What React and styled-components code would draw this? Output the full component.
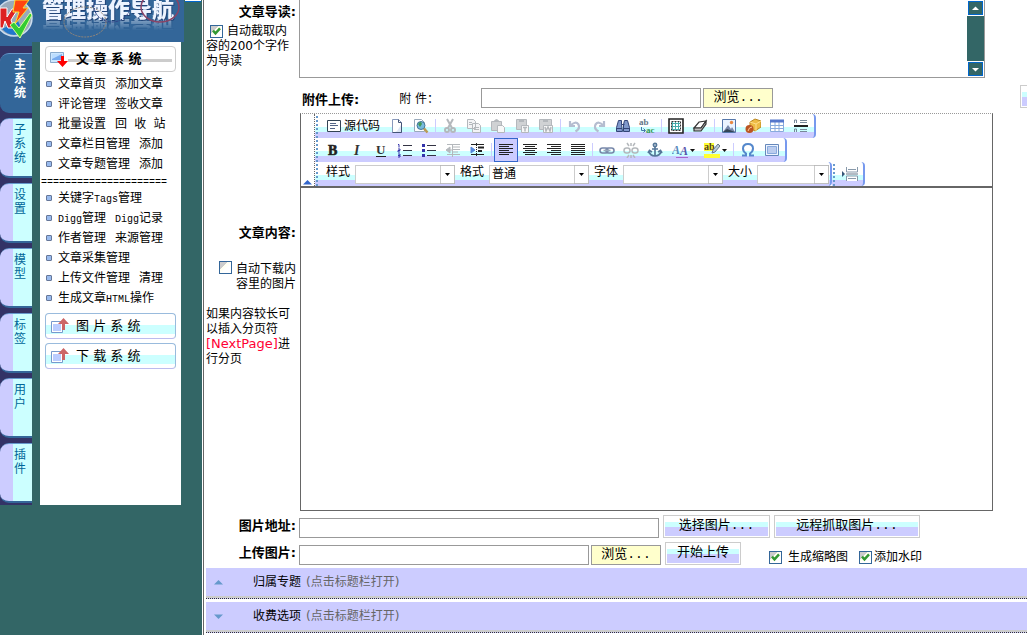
import React from "react";
import styled, { createGlobalStyle } from "styled-components";

const c = {
  teal: "#336666",
  blue: "#336699",
  navy: "#333366",
  lavender: "#ccccff",
  cyan: "#ccffff",
  cream: "#ffffcc",
  line: "#999999",
  dark: "#666666",
};

const uiFont = `"DejaVu Sans", "Noto Sans CJK SC", sans-serif`;
const songFont = `"Liberation Mono", "Noto Sans CJK SC", monospace`;

const GlobalStyle = createGlobalStyle`
  * { box-sizing: border-box; }
  body { margin: 0; background: #fff; font: 12px/15px ${uiFont}; color: #000; overflow: hidden; }
  button, input, select, textarea { font: inherit; color: inherit; margin: 0; padding: 0; border-radius: 0; }
  a { color: inherit; text-decoration: none; }
  svg { display: block; }
`;

const Page = styled.div`
  display: flex;
  height: 100vh;
  overflow: hidden;
`;

/* ---------- sidebar ---------- */

const Sidebar = styled.aside`
  flex: 0 0 203px;
  background: ${c.teal};
  border-right: 1px solid #fff;
`;

const Header = styled.header`
  position: relative;
  display: flex;
  align-items: flex-start;
  width: 184px;
  height: 42px;
  padding-left: 42px;
  background: ${c.blue};
`;

const Brand = styled.h1`
  margin: -5px 0 0;
  font: 900 22px/24px "Noto Sans CJK SC", sans-serif;
  color: #eef4ff;
  white-space: nowrap;
  text-shadow: 1px 1px 0 #224477;
  -webkit-box-reflect: below -4px linear-gradient(transparent 35%, rgba(0, 0, 0, 0.6));
`;

const HeaderArt = styled.svg`
  position: absolute;
  left: 0;
  top: 0;
`;

const ScrollStub = styled.div`
  position: absolute;
  left: 185px;
  top: 0;
  width: 16px;
  height: 2px;
  background: #fff;
  border-bottom: 1px solid #0066cc;
`;

const SideBody = styled.div`
  display: flex;
  align-items: flex-start;
  gap: 8px;
`;

const Tabs = styled.nav`
  display: flex;
  flex-direction: column;
  gap: 5px;
  width: 32px;
  padding: 11px 0 2px;
  background: linear-gradient(${c.blue} 4px, ${c.navy} 4px);
`;

const Tab = styled.button`
  display: flex;
  width: 32px;
  height: 60px;
  padding: 4px 0 0 14px;
  border: 0;
  border-top: 1px solid #6699cc;
  border-bottom: 2px solid ${c.blue};
  border-radius: 9px 0 0 9px;
  background: ${(p) =>
    p.$active ? c.blue : `linear-gradient(90deg, ${c.lavender} 13px, ${c.cyan} 13px)`};
  color: ${(p) => (p.$active ? "#fff" : "#006699")};
  font-weight: ${(p) => (p.$active ? "bold" : "normal")};
  line-height: 14px;
  text-align: left;
  word-break: break-all;

  span { width: 13px; }
`;

const Menu = styled.nav`
  width: 141px;
  min-height: 463px;
  padding: 4px 5px;
  background: #fff;
`;

const SystemTitle = styled.button`
  display: flex;
  align-items: center;
  gap: 7px;
  width: 131px;
  height: 26px;
  padding: 0 0 1px 4px;
  border: 1px solid ${(p) => (p.$open ? "#cccccc" : "#99bbdd")};
  border-bottom-color: ${(p) => (p.$open ? "#cccccc" : "#bbbbee")};
  border-radius: 4px;
  background: ${(p) =>
    p.$open
      ? "linear-gradient(#fff 12px, #ccc 12px 15px, #fff 15px) 22px 0 / 104px 100% no-repeat #fff"
      : `linear-gradient(#fff 11px, ${c.cyan} 11px 20px, #fff 20px)`};
  font: ${(p) => (p.$open ? "bold" : "normal")} 13px/20px ${uiFont};
  white-space: nowrap;

  & + & { margin-top: 4px; }
`;

const MenuList = styled.ul`
  margin: 0;
  padding: 0;
  list-style: none;
`;

const MenuItem = styled.li`
  display: flex;
  align-items: center;
  gap: 9px;
  height: 20px;
  padding-left: 1px;
  font: 12px/20px ${songFont};
  white-space: nowrap;
`;

const Bullet = styled.i`
  width: 6px;
  height: 6px;
  margin: 0 -3px 3px 0;
  border: 1px solid #667799;
  border-radius: 1px;
  background: #99bbee;
`;

const Latin = styled.span`
  font-size: 10px;
`;

const Divider = styled.div`
  height: 14px;
  margin: 0 -4px;
  font: 10px/16px ${songFont};
  white-space: nowrap;
`;

const MenuGroup = styled.div`
  padding: 3px 0 4px;
`;

/* ---------- form ---------- */

const Main = styled.main`
  flex: 1;
  min-width: 0;
  overflow: hidden;
  border-left: 1px solid ${c.dark};
`;

const Row = styled.div`
  display: grid;
  grid-template-columns: 92px minmax(0, 1fr);
  gap: 3px;
`;

const LabelCell = styled.div`
  padding: ${(p) => p.$top || 0}px 0 0 2px;
`;

const FieldLabel = styled.label`
  display: block;
  font: bold 13px/16px ${uiFont};
  text-align: ${(p) => p.$align || "right"};
  white-space: nowrap;
`;

const Hint = styled.div`
  margin-top: ${(p) => p.$gap}px;
  text-align: ${(p) => p.$align || "left"};
  white-space: nowrap;

  em { font: 13px/12px ${uiFont}; color: #ff0033; }
`;

const CheckBox = styled.span`
  position: relative;
  display: inline-block;
  width: 13px;
  height: 13px;
  vertical-align: -1px;

  input {
    display: block;
    width: 13px;
    height: 13px;
    appearance: none;
    border: 1px solid ${c.blue};
    background: linear-gradient(135deg, #cccccc 35%, #ffffee 36%, #fff 60%);
  }
  svg { position: absolute; left: 0; top: 0; pointer-events: none; }
`;

const Check = ({ id, on }) => (
  <CheckBox>
    <input type="checkbox" id={id} defaultChecked={on} />
    {on && (
      <svg width="13" height="13" viewBox="0 0 13 13" fill="none" stroke="#339933" strokeWidth="2.4">
        <path d="M3 5.6 5.5 8.4 10 3.4" />
      </svg>
    )}
  </CheckBox>
);

const Intro = styled.div`
  display: flex;
  width: 100%;
  max-width: 686px;
  height: 78px;
  border: 1px solid ${c.line};
  border-top: 0;

  textarea { flex: 1; min-width: 0; border: 0; outline: 0; resize: none; overflow: hidden; }
`;

const ScrollBar = styled.div`
  display: flex;
  flex-direction: column;
  align-items: flex-end;
  justify-content: space-between;
  width: 17px;
  background: ${c.teal};
`;

const ScrollButton = styled.button`
  display: grid;
  place-items: center;
  width: 17px;
  height: 16px;
  border: 1px solid #fff;
  outline: 1px solid #0066cc;
  outline-offset: -2px;
  background: ${c.teal};
`;

const TextInput = styled.input`
  flex: 0 1 ${(p) => p.$w}px;
  min-width: 0;
  height: 20px;
  border: 1px solid ${c.line};
  background: #fff;
`;

const FormLine = styled.div`
  display: flex;
  align-items: flex-end;
  gap: 4px;
  height: ${(p) => p.$h}px;
  padding: ${(p) => p.$pad};
  white-space: nowrap;
`;

const Browse = styled.button`
  width: 70px;
  height: 20px;
  flex: none;
  margin-left: -2px;
  border: 1px solid ${c.line};
  background: ${c.cream};
  font: 13px/16px ${songFont};
`;

const Action = styled.button`
  width: ${(p) => p.$w}px;
  height: 23px;
  flex: none;
  padding-bottom: 1px;
  border: 1px solid #cccccc;
  background: linear-gradient(#fff 6px, ${c.cyan} 6px 11px, ${c.lavender} 11px 20px, #fff 20px) 1px 0 /
    calc(100% - 2px) 100% no-repeat #fff;
  font: 13px/16px ${songFont};
`;

const EdgeAction = styled(Action)`
  margin-left: auto;
  margin-right: -39px;
  padding-left: 3px;
`;

const AttachLabel = styled.label`
  width: 78px;
  margin-left: 36px;
  line-height: 18px;
`;

const OptionLabel = styled.label`
  line-height: 16px;
`;

const Option = styled.span`
  display: flex;
  align-items: center;
  gap: ${(p) => p.$gap}px;
  margin-left: ${(p) => p.$left}px;
`;

/* ---------- rich text editor ---------- */

const Editor = styled.div`
  width: calc(100% - 1px);
  max-width: 693px;
  margin-left: 1px;
  height: 398px;
  display: flex;
  flex-direction: column;
  border: 1px solid ${c.dark};
  border-top: 1px dotted ${c.line};
`;

const ToolArea = styled.div`
  display: flex;
  height: 74px;
  border-bottom: 2px solid ${c.dark};
`;

const Collapse = styled.button`
  display: flex;
  align-items: flex-end;
  width: 14px;
  padding: 0 0 1px 2px;
  border: 0;
  border-right: 1px dotted ${c.dark};
  background: #fff;
`;

const ToolRows = styled.div`
  min-width: 0;
`;

const ToolRow = styled.div`
  display: flex;
  height: 24px;
`;

const ToolBar = styled.div`
  display: flex;
  align-items: center;
  height: 24px;
  padding: 0 1px 0 6px;
  border-right: 2px solid #7799ee;
  border-radius: 0 4px 4px 0;
  background:
    linear-gradient(#6699cc 2px, transparent 2px) 1px 6px / 2px 4px repeat-y,
    linear-gradient(#fff 13px, ${c.cyan} 13px 18px, ${c.lavender} 18px);
`;

const ToolButton = styled.button`
  display: flex;
  align-items: center;
  justify-content: center;
  gap: 2px;
  flex: none;
  width: ${(p) => p.$w || 24}px;
  height: 24px;
  border: ${(p) => (p.$active ? "1px solid #3366cc" : "0")};
  background: ${(p) => (p.$active ? c.lavender : "none")};
  white-space: nowrap;
`;

const Separator = styled.i`
  width: 1px;
  height: 14px;
  margin: 0 2px;
  background: ${c.lavender};
`;

const ComboLabel = styled.label`
  padding: 0 5px;
  margin-bottom: 3px;
  white-space: nowrap;
`;

const Combo = styled.span`
  position: relative;
  width: ${(p) => p.$w}px;
  height: 19px;

  select {
    display: block;
    width: 100%;
    height: 19px;
    padding-left: 2px;
    appearance: none;
    border: 1px solid #cccccc;
    background: #fff;
    line-height: 15px;
  }
  svg { position: absolute; right: 0; top: 0; pointer-events: none; }
`;

const EditArea = styled.div`
  flex: 1;
  outline: 0;
`;

const g = "#b4b8bc";
const serif = "Liberation Serif, serif";
const icons = {
  source: (
    <g fill="none" stroke="#334455">
      <path d="M1.5 2.5h13v11h-13z" fill="#fff" />
      <path d="M4 5.5h6M4 7.5h8M4 10.5h5" stroke="#556688" />
    </g>
  ),
  page: (
    <g>
      <path d="M3.5 1.5h6l3 3v10h-9z" fill="#fff" stroke="#8899bb" />
      <path d="M9.5 1.5v3h3M12.5 5v9.5h-9" fill="none" stroke="#445577" />
      <path d="m8 13 4-6v7H6z" fill="#dde6f5" />
    </g>
  ),
  preview: (
    <g>
      <path d="M1.5 1.5h7l3 3v9h-10z" fill="#fff" stroke="#99aabb" />
      <circle cx="8" cy="7.5" r="4" fill="#77bbdd" stroke="#447799" />
      <path d="M5 6q3-4 4 0l-2 3z" fill="#449955" />
      <path d="m11 10.500 3.500 4" stroke="#bb9955" strokeWidth="2.500" />
    </g>
  ),
  cut: (
    <g fill="none" stroke={g} strokeWidth="2">
      <path d="M5 1 10 10M11 1 6 10" />
      <circle cx="5" cy="12" r="2" />
      <circle cx="11" cy="12" r="2" />
    </g>
  ),
  copy: (
    <g fill="#f4f4f6" stroke={g}>
      <path d="M1.500 1.500h6l2 2v7h-8zM6.500 5.500h6l2 2v7h-8z" />
      <path d="M8 9.500h5M8 11.500h5M3 4.500h3M3 6.500h3" />
    </g>
  ),
  paste: (
    <g stroke={g} fill="#d0d2d4">
      <path d="M1.500 3.500h10v9h-10z" />
      <path d="M4 3.500q2.500-4 5 0z" fill={g} />
      <path d="M7.500 7.500h5l2 2v5h-7z" fill="#f8f8f8" />
    </g>
  ),
  pasteText: (
    <g stroke={g} fill="#d0d2d4">
      <path d="M2.500 1.500h10v10h-10z" />
      <path d="M5 2.500h5" strokeWidth="3" />
      <path d="M7.500 7.500h7v7h-7z" fill="#f8f8f8" />
      <path d="M9 9.500h4M11 9.500v4" strokeWidth="1.500" />
    </g>
  ),
  pasteWord: (
    <g stroke={g} fill="#d0d2d4">
      <path d="M1.500 1.500h12v10h-12z" />
      <path d="M5 2.500h5" strokeWidth="3" />
      <path d="M5.500 7.500h9v7h-9z" fill="#f8f8f8" />
      <path d="m7 9 1 4 2-4 2 4 1-4" fill="none" strokeWidth="1.500" />
    </g>
  ),
  undo: <path d="M3 3v5h5M3.500 7.500q5-5 8-1 2 4-3 7" fill="none" stroke="#b5bdd0" strokeWidth="2.200" />,
  redo: <path d="M13 3v5H8M12.500 7.500q-5-5-8-1-2 4 3 7" fill="none" stroke="#b5bdd0" strokeWidth="2.200" />,
  find: (
    <g fill="#8099cc" stroke="#334477">
      <path d="M3.500 2.500h3v4l1 7h-6v-4zM9.500 2.500h3l2 7v4h-6v-7z" />
      <path d="M6.500 6.500h3M2 10.500h5M9 10.500h5" />
    </g>
  ),
  replace: (
    <g fontFamily={serif} fontSize="9" fontWeight="bold">
      <text x="0" y="7" fill="#667788">ab</text>
      <text x="7" y="15" fill="#339955">ac</text>
      <path d="M2.500 9v3.500H6M4.500 10.500l2 2-2 2" fill="none" stroke="#4477aa" />
    </g>
  ),
  selectAll: (
    <g fill="none">
      <path d="M1 1h14v14H1z" stroke="#222" strokeWidth="1.600" fill="#fff" />
      <path d="M4.500 4v8M7.500 4v8M10.500 4v8M4 5.500h8M4 8.500h8M4 11.500h8" stroke="#44aaaa" />
      <path d="M3.500 3.500h9v9h-9z" stroke="#333" strokeDasharray="2 1" />
    </g>
  ),
  eraser: (
    <g fill="#fff" stroke="#333" strokeWidth="1.200">
      <path d="m7 4 7-1-5 7H2z" />
      <path d="M2 10v3h7l5-7V3l-5 7z" fill="#bbb" />
    </g>
  ),
  image: (
    <g>
      <path d="M1.500 1.500h13v13h-13z" fill="#eaf4ff" stroke="#5577aa" />
      <path d="m2 14 5-7 3 4 1-2 3 5z" fill="#7788aa" />
      <circle cx="10.500" cy="4.500" r="1.700" fill="#e88844" />
      <path d="m2 14 4-3 8 3z" fill="#334455" />
    </g>
  ),
  flash: (
    <g>
      <path d="m5 4 5-3 6 2v6l-6 4-5-3z" fill="#eebb44" stroke="#bb8822" />
      <path d="m5 4 6 2 5-3M11 6v7" stroke="#ffdd88" fill="none" />
      <circle cx="4.500" cy="11" r="4" fill="#bb5522" />
      <path d="M3 13q1-4 4-4" stroke="#ffcc99" fill="none" />
    </g>
  ),
  table: (
    <g fill="#fff" stroke="#88aadd">
      <path d="M1.500 2.500h13v11h-13zM6 3v11M10 3v11M2 7.500h12M2 10.500h12" />
      <path d="M1 3h14" stroke="#5577cc" strokeWidth="3" />
    </g>
  ),
  rule: (
    <g stroke="#778899">
      <path d="M1 8h14" stroke="#222" strokeWidth="2" />
      <path d="M7 2.500h7M7 4.500h7M7 11.500h7M7 13.500h7M1.500 5v-3h2v3M1.500 14v-3h2v3" fill="none" />
    </g>
  ),
  bold: <text x="3" y="13" fontFamily={serif} fontSize="14" fontWeight="bold" fill="#222" stroke="#222" strokeWidth=".6">B</text>,
  italic: <text x="5" y="13" fontFamily={serif} fontSize="14" fontWeight="bold" fontStyle="italic" fill="#333">I</text>,
  underline: (
    <g>
      <text x="3" y="12" fontFamily={serif} fontSize="13" fontWeight="bold" fill="#333">U</text>
      <path d="M3 14.500h10" stroke="#222" />
    </g>
  ),
  ol: (
    <g stroke="#334" fill="none">
      <path d="M6 3.500h9M6 8.500h9M6 13.500h9" />
      <path d="M1 2.500h1v3M1 7h2v1.500H1V10h2M1 12h2v1.500H1 3V15H1" stroke="#3333aa" />
    </g>
  ),
  ul: (
    <g stroke="#334">
      <path d="M6 3.500h9M6 8.500h9M6 13.500h9" />
      <path d="M1 3.500h3M1 8.500h3M1 13.500h3" stroke="#3333aa" strokeWidth="3" />
    </g>
  ),
  outdent: (
    <g stroke={g} fill="none">
      <path d="M2 2.500h13M8 5h7M8 7.500h7M8 10h5M2 12.500h13M7.500 2v13" />
      <path d="m5 5-4 3 4 3zM4 8h4" fill={g} />
    </g>
  ),
  indent: (
    <g stroke="#222" fill="none">
      <path d="M2 2.500h13M2 12.500h13" />
      <path d="M7.500 1v14" strokeDasharray="1 1" />
      <path d="M9 5.500h6M9 9h4" strokeWidth="2" />
      <path d="m2 5 4 3-4 3z" fill="#5588dd" stroke="#5588dd" />
    </g>
  ),
  left: <path d="M1 2.500h14M1 4.500h10M1 6.500h14M1 8.500h10M1 10.500h14M1 12.500h10" stroke="#222" />,
  center: <path d="M1 2.500h14M3 4.500h10M1 6.500h14M3 8.500h10M1 10.500h14M3 12.500h10" stroke="#222" />,
  right: <path d="M1 2.500h14M5 4.500h10M1 6.500h14M5 8.500h10M1 10.500h14M5 12.500h10" stroke="#222" />,
  justify: <path d="M1 2.500h14M1 4.500h14M1 6.500h14M1 8.500h14M1 10.500h14M1 12.500h14" stroke="#222" />,
  link: (
    <g fill="none" stroke="#7788aa" strokeWidth="1.600">
      <rect x="1" y="6" width="8" height="5" rx="2.500" />
      <rect x="7" y="6" width="8" height="5" rx="2.500" />
      <path d="M4.500 8.500h7" stroke="#99aabb" />
    </g>
  ),
  unlink: (
    <g fill="none" stroke={g} strokeWidth="1.500">
      <rect x="1" y="6" width="6" height="5" rx="2.500" />
      <rect x="9" y="6" width="6" height="5" rx="2.500" />
      <path d="M8 1v3M4 1l2 3M12 1l-2 3M8 16v-3M4 16l2-3M12 16l-2-3" />
    </g>
  ),
  anchor: (
    <g fill="none" stroke="#557799" strokeWidth="1.700">
      <circle cx="8" cy="3" r="1.600" />
      <path d="M8 5v9M5 7h6M2 9q1 5 6 5 5 0 6-5M1 11l1.500-2.500L5 10M15 11l-1.500-2.500L11 10" />
    </g>
  ),
  color: (
    <g>
      <text x="0" y="12" fontFamily={serif} fontStyle="italic" fontWeight="bold" fontSize="12" fill="#5588bb">
        A<tspan dy="1" fill="#5555aa">A</tspan>
      </text>
      <path d="M4 15.500h12" stroke="#aa66cc" />
    </g>
  ),
  marker: (
    <g>
      <path d="M0 1h10v8H0zM0 12h16v4H0z" fill="#ffff33" />
      <text x="0" y="8" fontFamily={serif} fontSize="10" fontWeight="bold" fill="#554422">ab</text>
      <path d="m8 11 1-3 5-6 2 2-5 6z" fill="#bbccdd" stroke="#667788" />
    </g>
  ),
  omega: (
    <path d="M2 13.500h4v-2q-3-2-3-5 0-4.500 5-4.500t5 4.500q0 3-3 5v2h4" fill="none" stroke="#5588cc" strokeWidth="2" />
  ),
  frame: (
    <g fill="#eef4ff" stroke="#6688bb">
      <path d="M1.500 2.500h13v11h-13z" />
      <path d="M3.500 4.500h9v7h-9z" fill="#bbccee" stroke="#88aadd" />
    </g>
  ),
  pageBreak: (
    <g fill="#fff" stroke="#8899aa">
      <path d="M4.500 1v5h11V1M4.500 15v-5h11v5" />
      <path d="M6 3.500h8M6 12.500h8" />
      <path d="M4 8h12" stroke="#667788" />
      <path d="m0 5 3 3-3 3z" fill="#335577" stroke="none" />
    </g>
  ),
};

const Icon = ({ name }) => (
  <svg width="16" height="16" viewBox="0 0 16 16" aria-hidden="true">
    {icons[name]}
  </svg>
);

const Caret = () => (
  <svg width="5" height="3" viewBox="0 0 5 3" aria-hidden="true">
    <path d="M0 0h5L2.500 3z" fill="#111" />
  </svg>
);

const Tools = ({ groups }) =>
  groups.map((group, i) => (
    <React.Fragment key={i}>
      {i > 0 && <Separator />}
      {group.map((name) => {
        const split = name === "color" || name === "marker";
        return (
          <ToolButton key={name} type="button" aria-label={name} $w={split ? 32 : 24} $active={name === "left"}>
            <Icon name={name} />
            {split && <Caret />}
          </ToolButton>
        );
      })}
    </React.Fragment>
  ));

const ComboBox = ({ id, label, value, w }) => (
  <>
    <ComboLabel htmlFor={id}>{label}</ComboLabel>
    <Combo $w={w}>
      <select id={id} defaultValue={value}>
        <option>{value}</option>
      </select>
      <svg width="15" height="19" viewBox="0 0 15 19">
        <path d="M.5.500h14v18H.5z" fill="#fff" stroke="#999" strokeDasharray="1 1" />
        <path d="M5 8h5L7.500 11z" />
      </svg>
    </Combo>
  </>
);

const Section = styled.button`
  display: flex;
  align-items: center;
  width: calc(100% - 2px);
  height: 31px;
  margin: 0 0 3px 2px;
  padding: 0 0 1px 8px;
  border: 0;
  border-bottom: 1px dotted #333;
  background: linear-gradient(${c.lavender} 28px, #cccccc 28px);
  text-align: left;

  svg { margin-right: 30px; }
  small { margin-left: 5px; font-size: 12px; color: ${c.dark}; }
`;

const Arrow = ({ up, fill, w = 9 }) => (
  <svg width={w} height="5" viewBox="0 0 9 5" aria-hidden="true">
    <path d={up ? "M0 4.500h9L4.500 0z" : "M0 .5h9L4.500 5z"} fill={fill} />
  </svg>
);

const UpIcon = () => (
  <svg width="19" height="16" viewBox="0 0 19 16" aria-hidden="true">
    <path d="M1.500 3.500h11v11h-11z" fill="#fff" stroke="#7799cc" />
    <path d="M3 6h8v7H3z" fill="#bbccff" />
    <path d="M13.500 0 19 6h-4v6h-3V6H8z" fill="#cc6666" />
  </svg>
);

const DownIcon = () => (
  <svg width="19" height="16" viewBox="0 0 19 16" aria-hidden="true">
    <path d="M.5 1.500h13v10H.5z" fill="#cce6ff" stroke="#88aacc" />
    <path d="M2 3h10v6H2z" fill="#77aaee" />
    <path d="M2 3h10L2 8z" fill="#bbddff" />
    <path d="M11 5h3v5h4l-5.500 6L7 10h4z" fill="#ff0000" />
  </svg>
);

const menuTop = [
  ["文章首页", "添加文章"],
  ["评论管理", "签收文章"],
  ["批量设置", "回 收 站"],
  ["文章栏目管理", "添加"],
  ["文章专题管理", "添加"],
];
const menuBottom = [
  [<>关键字<Latin>Tags</Latin>管理</>],
  [<><Latin>Digg</Latin>管理</>, <><Latin>Digg</Latin>记录</>],
  ["作者管理", "来源管理"],
  ["文章采集管理"],
  ["上传文件管理", "清理"],
  [<>生成文章<Latin>HTML</Latin>操作</>],
];

const MenuBlock = ({ rows }) => (
  <MenuList>
    {rows.map((links, i) => (
      <MenuItem key={i}>
        <Bullet />
        {links.map((text, j) => (
          <a href="#" key={j}>{text}</a>
        ))}
      </MenuItem>
    ))}
  </MenuList>
);

const tabs = ["主系统", "子系统", "设置", "模型", "标签", "用户", "插件"];

export default function App() {
  return (
    <Page>
      <GlobalStyle />
      <Sidebar>
        <Header>
          <Brand>管理操作导航</Brand>
          <HeaderArt width="184" height="42" viewBox="0 0 184 42" fill="none" aria-hidden="true">
            <circle cx="14" cy="18" r="18" fill="#99aabb" stroke="#ccddee" strokeWidth="1.500" />
            <path d="M2 29q10 10 21 3l-5-11z" fill="#2277cc" />
            <path d="M0 8h7v9l5-8h6l-7 11 3 8H8l-3-7-2 7H0z" fill="#dd2222" stroke="#fff" />
            <path d="M15 0h14l-6 8h5L15 24l4-12h-6z" fill="#ff4411" stroke="#ffdd33" />
            <path d="m10 25 4-3 5 6L30 13l2 2-12 23z" fill="#33cc33" stroke="#ddff99" />
            <ellipse cx="85" cy="22" rx="21" ry="15" stroke="#998877" strokeDasharray="2 1" />
            <ellipse cx="112" cy="6" rx="18" ry="16" stroke="#334488" strokeDasharray="3 1" />
            <ellipse cx="160" cy="7" rx="19" ry="15" stroke="#884466" strokeWidth="1.500" />
          </HeaderArt>
          <ScrollStub />
        </Header>
        <SideBody>
          <Tabs>
            {tabs.map((t, i) => (
              <Tab key={t} type="button" $active={i === 0}><span>{t}</span></Tab>
            ))}
          </Tabs>
          <Menu>
            <SystemTitle type="button" $open><DownIcon />文 章 系 统</SystemTitle>
            <MenuGroup>
              <MenuBlock rows={menuTop} />
              <Divider>=====================</Divider>
              <MenuBlock rows={menuBottom} />
            </MenuGroup>
            <SystemTitle type="button"><UpIcon />图 片 系 统</SystemTitle>
            <SystemTitle type="button"><UpIcon />下 载 系 统</SystemTitle>
          </Menu>
        </SideBody>
      </Sidebar>

      <Main>
        <Row>
          <LabelCell $top={4}>
            <FieldLabel htmlFor="intro">文章导读:</FieldLabel>
            <Hint $gap={4}>
              <label htmlFor="auto-cut">
                <Option $left={4} $gap={4}><Check id="auto-cut" on />自动截取内</Option>
                容的200个字作<br />为导读
              </label>
            </Hint>
          </LabelCell>
          <Intro>
            <textarea id="intro" />
            <ScrollBar>
              <ScrollButton type="button" aria-label="up"><Arrow up fill="#fff" w={7} /></ScrollButton>
              <ScrollButton type="button" aria-label="down"><Arrow fill="#fff" w={7} /></ScrollButton>
            </ScrollBar>
          </Intro>
        </Row>

        <FormLine $h={35} $pad="0 0 5px 98px">
          <FieldLabel as="span" $align="left">附件上传:</FieldLabel>
          <AttachLabel htmlFor="attach">附 件：</AttachLabel>
          <TextInput id="attach" $w={220} />
          <Browse type="button">浏览...</Browse>
          <EdgeAction type="button" $w={46} aria-label="添加" />
        </FormLine>

        <Row>
          <LabelCell $top={112}>
            <FieldLabel as="div">文章内容:</FieldLabel>
            <Hint $gap={20} $align="right">
              <label htmlFor="auto-load">
                <Check id="auto-load" /> 自动下载内<br />容里的图片
              </label>
            </Hint>
            <Hint $gap={15}>
              如果内容较长可<br />以插入分页符<br /><em>[NextPage]</em>进<br />行分页
            </Hint>
          </LabelCell>
          <Editor>
            <ToolArea>
              <Collapse type="button" aria-label="collapse"><Arrow up fill="#3366cc" /></Collapse>
              <ToolRows>
                <ToolRow>
                  <ToolBar>
                    <ToolButton type="button" $w={64}><Icon name="source" />源代码</ToolButton>
                    <Tools
                      groups={[
                        ["page", "preview"],
                        ["cut", "copy", "paste", "pasteText", "pasteWord"],
                        ["undo", "redo", "find", "replace"],
                        ["selectAll", "eraser"],
                        ["image", "flash", "table", "rule"],
                      ]}
                    />
                  </ToolBar>
                </ToolRow>
                <ToolRow>
                  <ToolBar>
                    <Tools
                      groups={[
                        ["bold", "italic", "underline", "ol", "ul", "outdent", "indent"],
                        ["left", "center", "right", "justify"],
                        ["link", "unlink", "anchor", "color", "marker"],
                        ["omega", "frame"],
                      ]}
                    />
                  </ToolBar>
                </ToolRow>
                <ToolRow>
                  <ToolBar>
                    <ComboBox id="style" label="样式" value="" w={100} />
                    <ComboBox id="format" label="格式" value="普通" w={100} />
                    <ComboBox id="font" label="字体" value="" w={100} />
                    <ComboBox id="size" label="大小" value="" w={72} />
                  </ToolBar>
                  <ToolBar>
                    <ToolButton type="button" aria-label="page break"><Icon name="pageBreak" /></ToolButton>
                  </ToolBar>
                </ToolRow>
              </ToolRows>
            </ToolArea>
            <EditArea contentEditable suppressContentEditableWarning role="textbox" aria-label="文章内容" />
          </Editor>
        </Row>

        <Row>
          <LabelCell $top={7}><FieldLabel htmlFor="pic">图片地址:</FieldLabel></LabelCell>
          <FormLine $h={30} $pad="0 0 3px">
            <TextInput id="pic" $w={360} />
            <Action type="button" $w={107}>选择图片...</Action>
            <Action type="button" $w={146}>远程抓取图片...</Action>
          </FormLine>
        </Row>
        <Row>
          <LabelCell $top={4}><FieldLabel htmlFor="upload">上传图片:</FieldLabel></LabelCell>
          <FormLine $h={27} $pad="0 0 3px">
            <TextInput id="upload" $w={290} />
            <Browse type="button">浏览...</Browse>
            <Action type="button" $w={76}>开始上传</Action>
            <Option $left={24} $gap={6}>
              <Check id="thumb" on /><OptionLabel htmlFor="thumb">生成缩略图</OptionLabel>
            </Option>
            <Option $left={7} $gap={2}>
              <Check id="mark" on /><OptionLabel htmlFor="mark">添加水印</OptionLabel>
            </Option>
          </FormLine>
        </Row>

        <Section type="button"><Arrow up fill="#6699cc" />归属专题<small>(点击标题栏打开)</small></Section>
        <Section type="button"><Arrow fill="#6699cc" />收费选项<small>(点击标题栏打开)</small></Section>
      </Main>
    </Page>
  );
}
